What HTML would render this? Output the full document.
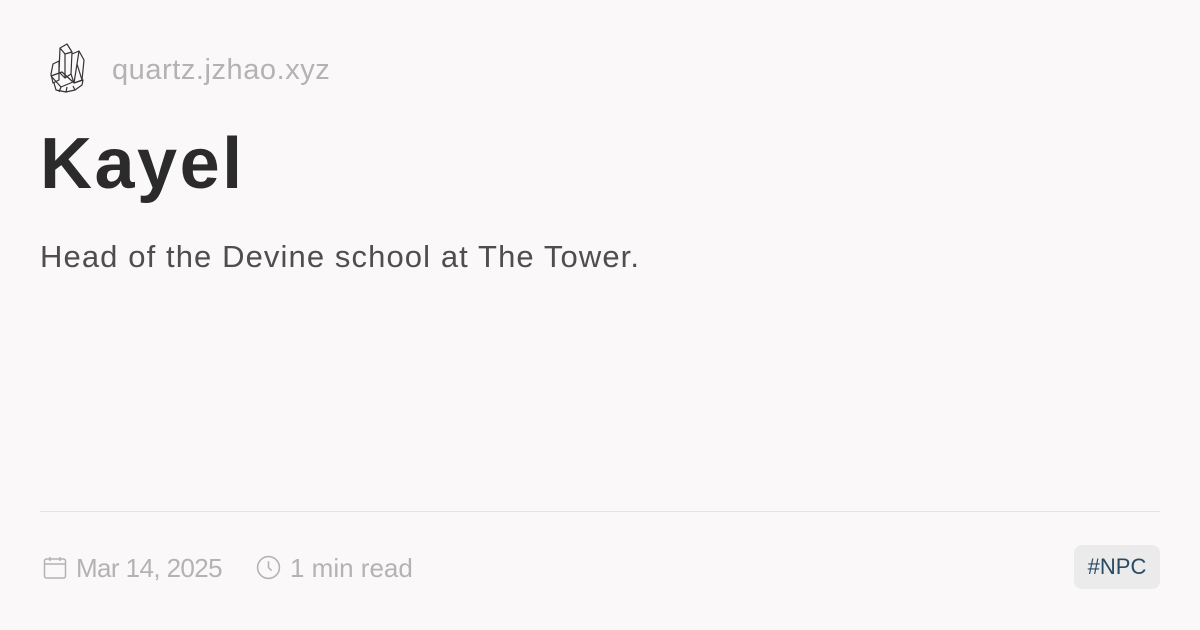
<!DOCTYPE html>
<html><head><meta charset="utf-8"><style>
html,body{margin:0;padding:0}
body{width:1200px;height:630px;background:#faf8f8;font-family:"Liberation Sans",sans-serif;position:relative;overflow:hidden}
.site{position:absolute;left:112px;top:50px;font-size:29px;color:#b3b3b3;line-height:40px;letter-spacing:0.55px}
h1{position:absolute;left:40px;top:122px;margin:0;font-size:72px;font-weight:bold;color:#2b2b2b;line-height:84px;letter-spacing:2.5px}
.desc{position:absolute;left:40px;top:237px;font-size:31px;color:#4e4e4e;line-height:40px;letter-spacing:1.1px}
.hr{position:absolute;left:40px;right:40px;top:511px;height:1px;background:#e5e5e5}
.meta{position:absolute;top:551px;font-size:26px;color:#b3b3b3;line-height:34px}
.tag{position:absolute;left:1074px;top:545px;width:86px;height:44px;background:#ebebec;border-radius:8px;color:#284b63;font-size:22px;line-height:44px;text-align:center}
</style></head><body>
<svg style="position:absolute;left:46px;top:42px" width="42" height="52" viewBox="0 0 42 52" fill="none" stroke="#333" stroke-width="1.2" stroke-linejoin="round">
<path d="M14 6 L21 2 L26 10 L25 32 L19 36 L13 30 Z"/>
<path d="M14 6 L19 12 L19 36 M19 12 L26 10"/>
<path d="M26 12 L33 9 L38 18 L36 38 L28 41 L25 32"/>
<path d="M33 9 L31 22 L36 38 M31 22 L28 41"/>
<path d="M7 22 L13 19 L13 38 L7 41 L5 32 Z"/>
<path d="M5 34 L16 30 L27 40 L15 45 Z"/>
<path d="M8 41 L10 48 L20 50 L29 48 L36 43 L37 38 L28 41 M15 45 L13 50 M21 45 L20 50 M27 44 L29 48"/>
</svg>
<div class="site">quartz.jzhao.xyz</div>
<h1>Kayel</h1>
<div class="desc">Head of the Devine school at The Tower.</div>
<div class="hr"></div>
<svg style="position:absolute;left:43px;top:556px" width="24" height="24" viewBox="0 0 24 24" fill="none" stroke="#b3b3b3" stroke-width="1.5"><rect x="1.5" y="3" width="21" height="19" rx="2"/><path d="M1.5 8h21M7 1v4M17 1v4"/></svg>
<div class="meta" style="left:76px;letter-spacing:-0.6px">Mar 14, 2025</div>
<svg style="position:absolute;left:256px;top:555px" width="25" height="25" viewBox="0 0 24 24" fill="none" stroke="#b3b3b3" stroke-width="1.5"><circle cx="12" cy="12" r="10.5"/><path d="M12 6v6l3 3"/></svg>
<div class="meta" style="left:290px">1 min read</div>
<div class="tag">#NPC</div>
</body></html>
